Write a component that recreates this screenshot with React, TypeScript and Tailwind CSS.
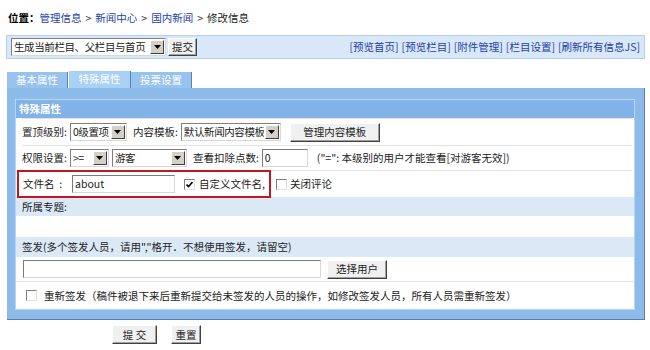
import type { ReactNode } from "react";

const FONT = "font-['Noto_Sans_CJK_SC','Noto_Sans',sans-serif]";

const Select = ({ text, className }: { text: string; className: string }) => (
  <div
    className={`flex h-[18px] border border-t-[#808080] border-l-[#808080] border-r-[#d8d8d8] border-b-[#d8d8d8] bg-white ${className}`}
  >
    <span className="flex-1 overflow-hidden whitespace-nowrap pl-[2px] leading-[16px] tracking-[-0.4px]">{text}</span>
    <span className="m-[1px] flex w-[14px] shrink-0 items-center justify-center border border-t-white border-l-white border-r-[#404040] border-b-[#404040] bg-[#d4d0c8]">
      <svg width="7" height="4" viewBox="0 0 7 4">
        <path d="M0 0h7L3.5 4z" fill="#000" />
      </svg>
    </span>
  </div>
);

const Input = ({ value, className }: { value?: string; className: string }) => (
  <div
    className={`h-[18px] border border-t-[#7a7a7a] border-l-[#7a7a7a] border-r-[#d8d8d8] border-b-[#d8d8d8] bg-white pl-[2px] leading-[16px] ${className}`}
  >
    {value}
  </div>
);

const Btn = ({ children, className }: { children: ReactNode; className: string }) => (
  <div
    className={`flex shrink-0 items-center justify-center whitespace-nowrap border border-t-white border-l-white border-r-[#404040] border-b-[#404040] bg-[#f0f0f0] shadow-[inset_-1px_-1px_0_#a0a0a0] ${className}`}
  >
    {children}
  </div>
);

const Check = ({ checked }: { checked?: boolean }) => (
  <span className="flex h-[11px] w-[11px] items-center justify-center border border-t-[#808080] border-l-[#808080] border-r-[#e0e0e0] border-b-[#e0e0e0] bg-white">
    {checked && (
      <svg width="7" height="7" viewBox="0 0 7 7">
        <path d="M0.5 3.5l2 2 4-4.5" stroke="#000" strokeWidth="1.6" fill="none" />
      </svg>
    )}
  </span>
);

const links = ["预览首页", "预览栏目", "附件管理", "栏目设置", "刷新所有信息JS"];

export default function App() {
  return (
    <div className={`h-[350px] w-[650px] overflow-hidden whitespace-nowrap bg-white text-[10.5px] text-[#222] ${FONT}`}>
      {/* breadcrumb */}
      <div className="flex h-[35px] items-center pl-[8px] pt-[1px]">
        <span className="font-bold text-black">位置：</span>
        <span className="text-[#1d3fa8]">管理信息</span>
        <span className="px-[4px]">&gt;</span>
        <span className="text-[#1d3fa8]">新闻中心</span>
        <span className="px-[4px]">&gt;</span>
        <span className="text-[#1d3fa8]">国内新闻</span>
        <span className="px-[4px]">&gt;</span>
        <span>修改信息</span>
      </div>

      {/* toolbar */}
      <div className="ml-[6px] mr-[5px] flex h-[24px] items-center justify-between border border-[#b5cfee] bg-[#d9e8f8] pl-[4px] pr-[4px]">
        <div className="flex items-center gap-[2px]">
          <Select text="生成当前栏目、父栏目与首页" className="w-[155px]" />
          <Btn className="h-[18px] w-[29px]">提交</Btn>
        </div>
        <div className="flex gap-[3px] text-[#1d3fa8]">
          {links.map((l) => (
            <span key={l}>[{l}]</span>
          ))}
        </div>
      </div>

      {/* tabs */}
      <div className="ml-[7px] mt-[12px] flex h-[17px] items-end">
        <div className="flex h-[16px] w-[61px] items-center justify-center border-r border-[#5d82b0] bg-[#98c2ee] text-white">
          基本属性
        </div>
        <div className="flex h-[17px] w-[63px] items-center justify-center border-l border-r border-l-white border-r-[#5d82b0] bg-[#a9d0f5] pb-[2px] text-white">
          特殊属性
        </div>
        <div className="flex h-[16px] w-[61px] items-center justify-center border-r border-[#5d82b0] bg-[#98c2ee] text-white">
          投票设置
        </div>
      </div>

      {/* panel */}
      <div className="ml-[7px] mr-[5px] h-[232px] border-b border-r border-[#5a7ea8] bg-[#8cbbea] pl-[8px] pr-[9px] pt-[11px]">
        <div className="border border-[#b8d6f6]">
          <div className="flex h-[18px] items-center bg-[#82b3e8] pl-[3px] font-bold text-white">特殊属性</div>
          <div className="bg-white pl-[6px] pr-[2px]">
            {/* row 1 */}
            <div className="flex h-[28px] items-center gap-[3px] border-t border-[#f0dede] border-b border-b-[#e4e4e4]">
              <span>置顶级别:</span>
              <Select text="0级置项" className="w-[57px]" />
              <span className="ml-[3px]">内容模板:</span>
              <Select text="默认新闻内容模板" className="w-[100px]" />
              <Btn className="ml-[6px] h-[19px] w-[90px]">管理内容模板</Btn>
            </div>
            {/* row 2 */}
            <div className="flex h-[25px] items-center gap-[3px] border-b border-[#e4e4e4]">
              <span>权限设置:</span>
              <Select text=">=" className="w-[39px]" />
              <Select text="游客" className="w-[75px]" />
              <span className="ml-[3px]">查看扣除点数:</span>
              <Input value="0" className="w-[46px]" />
              <span className="ml-[6px]">("=": 本级别的用户才能查看[对游客无效])</span>
            </div>
            {/* row 3 */}
            <div className="flex h-[26px] items-center">
              <div className="ml-[-5px] flex h-[28px] w-[254px] items-center border-2 border-[#c4161c] pl-[4px]">
                <span className="w-[49px]">文件名&nbsp;&nbsp;:</span>
                <Input value="about" className="w-[103px]" />
                <span className="ml-[9px]">
                  <Check checked />
                </span>
                <span className="ml-[4px]">自定义文件名,</span>
              </div>
              <span className="ml-[5px]">
                <Check />
              </span>
              <span className="ml-[3px]">关闭评论</span>
            </div>
          </div>
          <div className="flex h-[19px] items-center bg-[#dbe9f7] pl-[6px]">所属专题:</div>
          <div className="h-[21px] bg-white" />
          <div className="flex h-[20px] items-center bg-[#dbe9f7] pl-[6px]">签发(多个签发人员，请用","格开．不想使用签发，请留空)</div>
          <div className="flex h-[25px] items-center gap-[6px] border-b border-[#e4e4e4] bg-white pl-[7px]">
            <Input className="w-[298px] bg-[#fcfcfc]" />
            <Btn className="h-[19px] w-[60px]">选择用户</Btn>
          </div>
          <div className="flex h-[27px] items-center bg-white pl-[10px]">
            <Check />
            <span className="ml-[7px]">重新签发（稿件被退下来后重新提交给未签发的人员的操作，如修改签发人员，所有人员需重新签发）</span>
          </div>
        </div>
      </div>

      {/* bottom buttons */}
      <div className="ml-[112px] mt-[5px] flex gap-[14px]">
        <Btn className="h-[19px] w-[45px]">提 交</Btn>
        <Btn className="h-[19px] w-[30px]">重置</Btn>
      </div>
    </div>
  );
}
